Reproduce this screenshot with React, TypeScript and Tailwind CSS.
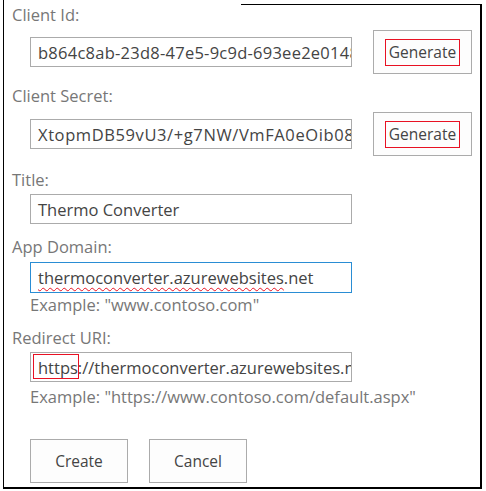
export default function App() {
  const label = "h-[20px] leading-[20px] text-[16.5px] text-[#777] whitespace-nowrap";
  const input =
    "ml-[18px] w-[322px] h-[30px] border border-[#ababab] bg-white pl-[7px] pr-[2px] pt-[2px] text-[16.5px] leading-[26px] text-[#444] overflow-hidden whitespace-nowrap";
  return (
    <div className="w-[486px] h-[491px] bg-white font-['Open_Sans',sans-serif]">
      <div className="ml-[3px] w-[479px] h-[489px] border-l border-b-2 border-black flex flex-col">
        <div className="h-[4px] shrink-0" />
        <div className="flex-1 border-r-2 border-black">
          <div className="ml-[237px] h-px bg-black" />
          <div className="pl-[8px]">
            <div className={label}>Client Id:</div>
            <div className="mt-[5px] flex items-center h-[44px]">
              <div className={input + " tracking-[0.25px]"}>b864c8ab-23d8-47e5-9c9d-693ee2e01487</div>
              <GenerateButton />
            </div>

            <div className={label + " mt-[12px]"}>Client Secret:</div>
            <div className="mt-[6px] flex items-center h-[44px]">
              <div className={input + " tracking-[0.6px]"}>XtopmDB59vU3/+g7NW/VmFA0eOib08fJk2</div>
              <GenerateButton />
            </div>

            <div className={label + " mt-[14px]"}>Title:</div>
            <div className={input + " mt-[4px]"}>Thermo Converter</div>

            <div className={label + " mt-[13px]"}>App Domain:</div>
            <div className="mt-[5px] ml-[18px] w-[322px] h-[31px] border border-[#2a8dd4] bg-white pl-[7px] pr-[2px] pt-[2px] text-[16.5px] leading-[26px] text-[#444] overflow-hidden whitespace-nowrap">
              <span className="underline decoration-wavy decoration-[#e81123] decoration-1 underline-offset-[3px]">
                thermoconverter.azurewebsites
              </span>
              .net
            </div>
            <div className="ml-[18px] mt-[2px] h-[20px] leading-[20px] text-[16.5px] text-[#777] whitespace-nowrap">
              Example: "www.contoso.com"
            </div>

            <div className={label + " mt-[13px]"}>Redirect URI:</div>
            <div className={input + " mt-[4px] relative"}>
              https://thermoconverter.azurewebsites.net
              <div className="absolute left-[2px] top-[1px] w-[46px] h-[25px] border border-[#e81123]" />
            </div>
            <div className="ml-[18px] mt-[5px] h-[20px] leading-[20px] text-[16.5px] text-[#777] whitespace-nowrap">
              Example: "https://www.contoso.com/default.aspx"
            </div>

            <div className="mt-[32px] ml-[18px] flex gap-[21px]">
              <div className="w-[98px] h-[44px] border border-[#ababab] bg-[#fdfdfd] flex items-center justify-center pt-[2px] text-[15.5px] text-[#444]">
                Create
              </div>
              <div className="w-[98px] h-[44px] border border-[#ababab] bg-[#fdfdfd] flex items-center justify-center pt-[2px] text-[15.5px] text-[#444]">
                Cancel
              </div>
            </div>
          </div>
        </div>
      </div>
    </div>
  );
}

function GenerateButton() {
  return (
    <div className="ml-[21px] w-[99px] h-[44px] border border-[#ababab] bg-[#fdfdfd] flex items-center pl-[11px]">
      <div className="w-[75px] h-[27px] border border-[#e81123] flex items-center justify-center pt-[1px] text-[15.5px] text-[#444] whitespace-nowrap overflow-visible">
        Generate
      </div>
    </div>
  );
}
